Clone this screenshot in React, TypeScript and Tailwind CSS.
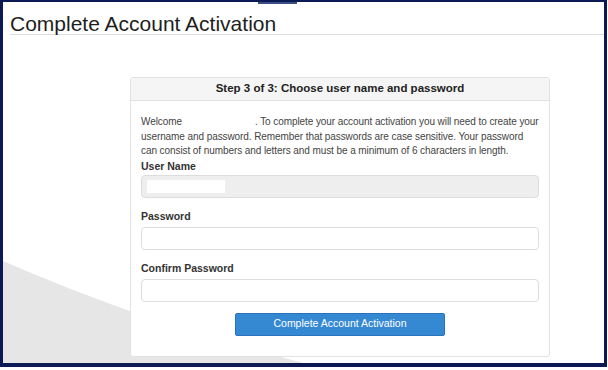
export default function App() {
  return (
    <div className="w-[608px] h-[370px] bg-white" style={{ fontFamily: '"Liberation Sans", Arial, sans-serif' }}>
      <div className="relative w-[607px] h-[367px] border-t-[2px] border-x-[3px] border-b-[4px] border-[#0b1a55] bg-white overflow-hidden">
        {/* little tab at the top */}
        <div className="absolute left-[255px] top-0 w-[39px] h-[2px] bg-[#3b4f86]" />

        {/* gray wave behind the card */}
        <svg className="absolute left-0 top-0" width="601" height="361" viewBox="0 0 601 361">
          <path d="M0 259 C 95 300, 180 330, 300 361 L 0 361 Z" fill="#e6e6e6" />
        </svg>

        <div className="relative">
          <h1 className="ml-[7px] pt-[12px] border-b border-[#dcdcdc] text-[21px] leading-[20px] text-[#1e1e1e]">
            Complete Account Activation
          </h1>

          <div className="ml-[127px] mt-[42px] w-[420px] h-[280px] bg-white border border-[#e2e2e2] rounded-[3px]">
            <div className="h-[23px] bg-[#f5f5f5] border-b border-[#e2e2e2] flex items-center justify-center text-[11.5px] font-bold text-[#222]">
              Step 3 of 3: Choose user name and password
            </div>

            <div className="px-[10px] pt-[14px]">
              <p className="text-[10px] leading-[14.5px] tracking-[-0.08px] text-[#444] whitespace-nowrap">
                Welcome<span className="inline-block w-[73px]"></span>. To complete your account activation you will need to create your
                <br />
                username and password. Remember that passwords are case sensitive. Your password
                <br />
                can consist of numbers and letters and must be a minimum of 6 characters in length.
              </p>

              <label className="block text-[10.5px] leading-[14px] font-bold text-[#333]">User Name</label>
              <div className="mt-[2px] h-[23px] w-[398px] bg-[#eeeeee] border border-[#dddddd] rounded-[4px] flex items-center pl-[5px]">
                <div className="w-[78px] h-[13px] bg-white" />
              </div>

              <label className="block mt-[11px] text-[10.5px] leading-[14px] font-bold text-[#333]">Password</label>
              <div className="mt-[4px] h-[23px] w-[398px] bg-white border border-[#dddddd] rounded-[4px]" />

              <label className="block mt-[11px] text-[10.5px] leading-[14px] font-bold text-[#333]">Confirm Password</label>
              <div className="mt-[4px] h-[23px] w-[398px] bg-white border border-[#dddddd] rounded-[4px]" />

              <div className="mt-[11px] flex justify-center">
                <button className="w-[210px] h-[23px] bg-[#3589d2] border border-[#2a72bb] rounded-[2px] text-white text-[10.5px]">
                  Complete Account Activation
                </button>
              </div>
            </div>
          </div>
        </div>
      </div>
    </div>
  )
}
